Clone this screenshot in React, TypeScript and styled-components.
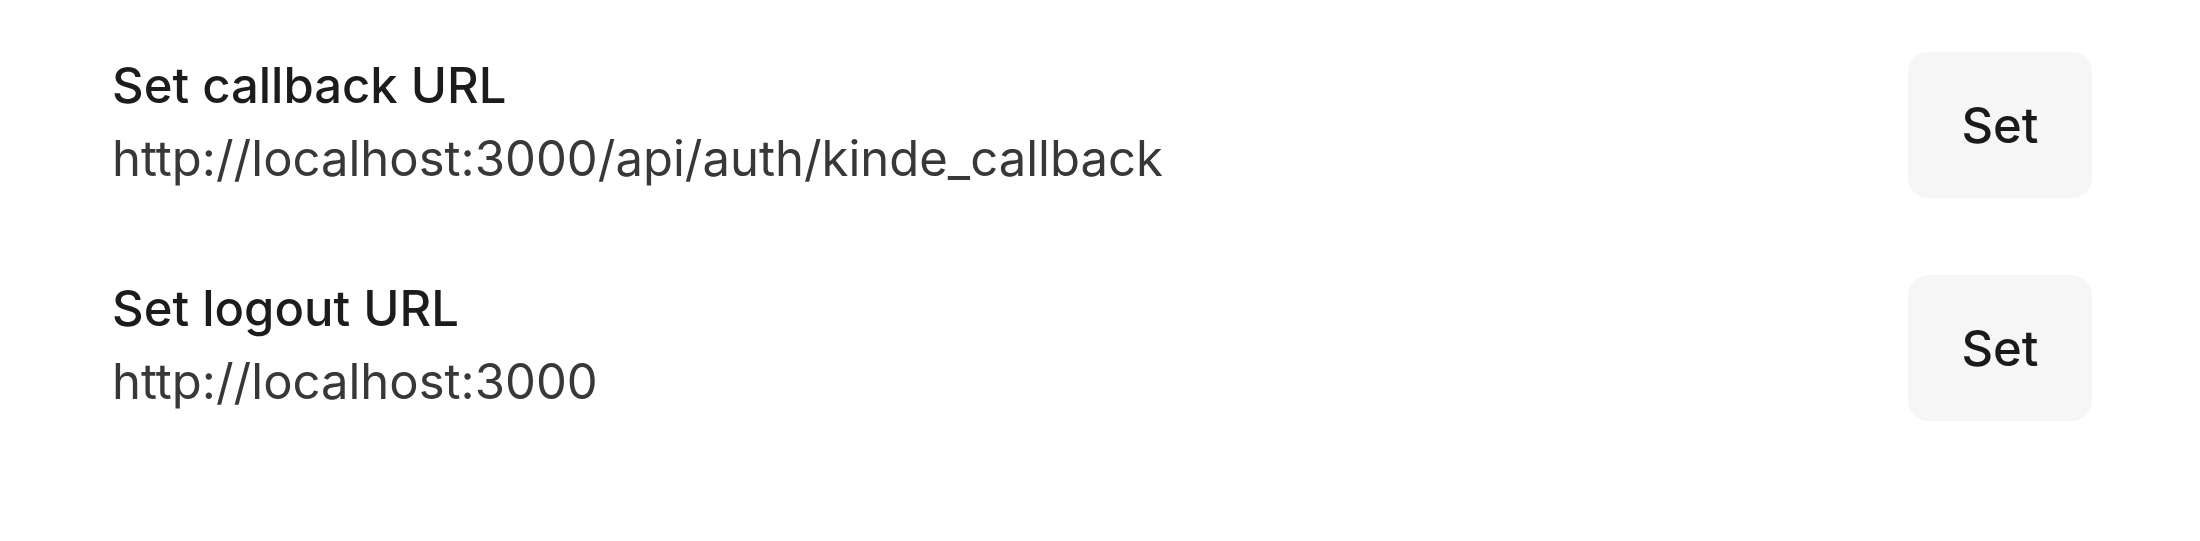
import React from "react";
import styled, { createGlobalStyle } from "styled-components";

const GlobalStyle = createGlobalStyle`
  html, body {
    margin: 0;
    padding: 0;
    background: #ffffff;
  }

  body {
    font-family: Inter, "Noto Sans", "Liberation Sans", sans-serif;
    -webkit-font-smoothing: antialiased;
  }
`;

interface IRedirect {
  id: string;
  label: string;
  url: string;
}

const redirects: IRedirect[] = [
  {
    id: "callback",
    label: "Set callback URL",
    url: "http://localhost:3000/api/auth/kinde_callback",
  },
  {
    id: "logout",
    label: "Set logout URL",
    url: "http://localhost:3000",
  },
];

const App = () => {
  return (
    <>
      <GlobalStyle />
      <Container>
        {redirects.map((item) => (
          <Row key={item.id}>
            <TextContainer>
              <Title>{item.label}</Title>
              <Url>{item.url}</Url>
            </TextContainer>
            <SetButton type="button">Set</SetButton>
          </Row>
        ))}
      </Container>
    </>
  );
};

const Container = styled.div`
  width: 2200px;
  height: 541px;
  box-sizing: border-box;
  padding: 52px 108px 0 112px;

  display: flex;
  flex-direction: column;
  gap: 77px;
`;

const Row = styled.div`
  display: flex;
  align-items: center;
  justify-content: space-between;
`;

const TextContainer = styled.div`
  display: flex;
  flex-direction: column;
  margin-top: -6px;
`;

const Title = styled.div`
  font-size: 49px;
  line-height: 73px;
  font-weight: 500;
  color: #1c1c1c;
`;

const Url = styled.div`
  font-size: 49px;
  line-height: 73px;
  font-weight: 400;
  color: #383838;
`;

const SetButton = styled.button`
  width: 184px;
  height: 146px;
  border: none;
  border-radius: 20px;
  background: #f6f6f6;

  font-family: inherit;
  font-size: 49px;
  font-weight: 500;
  color: #1a1a1a;
  cursor: pointer;
`;

export default App;
